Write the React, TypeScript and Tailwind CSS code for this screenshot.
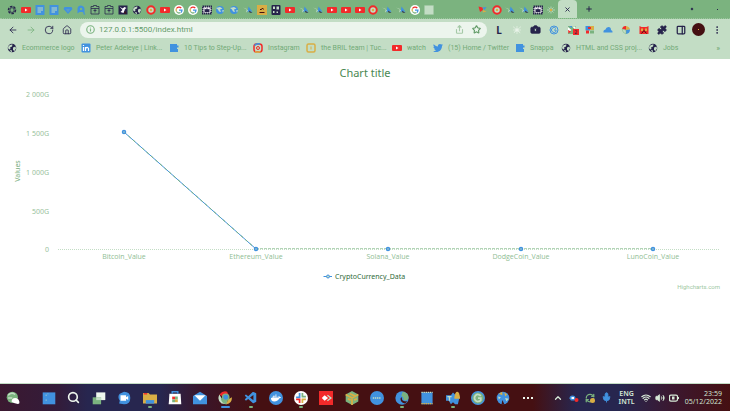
import type { ReactNode } from "react";
import {
  ArrowLeft, ArrowRight, RotateCw, House, Info, Share, Star, Camera, Puzzle, PanelRight,
  EllipsisVertical, Plus, X, ChevronUp, Mic, Wifi, Volume2, Search, RefreshCw,
} from "lucide-react";
import { VscVscode } from "react-icons/vsc";
import { FaDocker, FaTwitter } from "react-icons/fa";

const INK = "#26234b";
const RED = "#f22a2a";
const BLUE = "#4192df";
const GOLD = "#d9ae45";
const GREEN = "#7bb37f";
const PALE = "#c3ddc5";
const MAROON = "#451012";

function Svg({ children, size = "size-[10px]" }: { children: ReactNode; size?: string }) {
  return (
    <svg viewBox="0 0 20 20" className={`${size} shrink-0`} aria-hidden="true">
      {children}
    </svg>
  );
}

function Globe({ size }: { size?: string }) {
  return (
    <Svg size={size}>
      <circle cx="10" cy="10" r="8.5" fill={INK} />
      <path d="M3 6q4-4 8-3l-1 4-4 2 1 3-3 1-2-3zM12 9l5-2 1 4-3 5-3-2zM6 14l4 1v3l-3-1z" fill={PALE} />
    </Svg>
  );
}
function Knot() {
  return (
    <Svg>
      <circle cx="10" cy="10" r="7" fill="none" stroke={INK} strokeWidth="3" strokeDasharray="5 2" />
      <path d="M6 8l4-3 4 3v5l-4 2-4-2z" fill="none" stroke={INK} strokeWidth="1.5" />
    </Svg>
  );
}
function Youtube({ size }: { size?: string }) {
  return (
    <Svg size={size}>
      <rect x="0" y="4" width="20" height="12" rx="2" fill={RED} />
      <path d="M8 7l5 3-5 3z" fill="#fff" />
    </Svg>
  );
}
function Docs() {
  return (
    <Svg>
      <rect x="1" y="0" width="18" height="20" rx="1" fill={BLUE} />
      <path d="M5 6h11M5 10h11M5 14h7" stroke={PALE} strokeWidth="2" />
    </Svg>
  );
}
function Diamond() {
  return (
    <Svg>
      <path d="M3 4h14l2 4-9 10L1 8z" fill={BLUE} />
      <path d="M6 8h8l-4 7z" fill="#5a9bcb" />
    </Svg>
  );
}
function Rocket() {
  return (
    <Svg>
      <path d="M3 17V8q0-7 7-7 7 1 7 7v9l-4-3H7z" fill={BLUE} />
      <circle cx="10" cy="8" r="2.500" fill={GREEN} />
      <path d="M15 14l4 5h-4z" fill={BLUE} />
    </Svg>
  );
}
function Box() {
  return (
    <Svg>
      <path d="M2 7V3h5V1h6v2h5v4M2 7h16v11H2zM7 11h6M10 7v8" fill="none" stroke={INK} strokeWidth="1.500" />
    </Svg>
  );
}
function DarkBird() {
  return (
    <Svg>
      <rect x="1" y="1" width="18" height="18" fill={INK} />
      <path d="M3 3l6 4 4-3 4 2-3 2-3 8-6-2 4-4z" fill="#fff" />
      <path d="M14 12l3 5h-5z" fill={MAROON} />
    </Svg>
  );
}
function RedRing() {
  return (
    <Svg>
      <circle cx="10" cy="10" r="7.5" fill={PALE} stroke={RED} strokeWidth="4" />
      <circle cx="10" cy="10" r="2.5" fill={GOLD} />
    </Svg>
  );
}
function Google() {
  return (
    <Svg>
      <circle cx="10" cy="10" r="10" fill="#fff" />
      <path d="M14.500 6A6 6 0 0 0 5 7" fill="none" stroke={RED} strokeWidth="2.500" />
      <path d="M5 7a6 6 0 0 0 0 6" fill="none" stroke={GOLD} strokeWidth="2.500" />
      <path d="M5 13a6 6 0 0 0 8 2" fill="none" stroke={GREEN} strokeWidth="2.500" />
      <path d="M10 10h6q0 3-2 5" fill="none" stroke={BLUE} strokeWidth="2.500" />
    </Svg>
  );
}
function Film() {
  return (
    <Svg>
      <path d="M1 3h18v14H1z" fill="#fff" stroke={INK} strokeWidth="4" strokeDasharray="3 1" />
      <path d="M5 7l3 2 2-3 2 3 3-2v7H5z" fill={INK} />
    </Svg>
  );
}
function BlueGlobe() {
  return (
    <Svg>
      <circle cx="10" cy="10" r="8" fill={BLUE} />
      <path d="M2 6l8-2 5 3-5 2 2 5-4-1-2-4zM14 11l4-1-2 5z" fill={PALE} />
    </Svg>
  );
}
function Plane() {
  return (
    <Svg>
      <path d="M0 5l8 3-2 7 5-4" fill={PALE} />
      <path d="M11 3l4 5 4 6-6-2-4 3 1-6z" fill={BLUE} />
      <path d="M12 11l7 5-6-1z" fill={INK} />
    </Svg>
  );
}
function Tan() {
  return (
    <Svg>
      <rect width="20" height="20" fill={GOLD} />
      <path d="M6 9h3l2-3 2 3M5 15h10" stroke={MAROON} strokeWidth="2" fill="none" />
    </Svg>
  );
}
function Mask() {
  return (
    <Svg>
      <rect x="1" width="18" height="20" rx="2" fill={INK} />
      <path d="M4 3h4v5H4zM11 3h5v6h-5zM4 12h3v4H4zM11 13h3v3h-3z" fill={PALE} />
    </Svg>
  );
}
function Blank() {
  return (
    <Svg>
      <rect x="1" y="1" width="18" height="18" fill={PALE} stroke="#a8cbaa" strokeDasharray="2 2" />
    </Svg>
  );
}
function Pinwheel() {
  return (
    <Svg>
      <path d="M1 3l8 2 1 5-6 4z" fill={RED} />
      <path d="M9 5l8-1-4 6z" fill={BLUE} />
      <path d="M10 10l7 3-8 2z" fill={GOLD} />
    </Svg>
  );
}
function Spark() {
  return (
    <Svg>
      <path d="M2 10h16M10 3v14M5 5l10 10M15 5L5 15" stroke={PALE} strokeWidth="1.500" />
      <circle cx="10" cy="10" r="2.500" fill={GOLD} />
    </Svg>
  );
}
function Linkedin() {
  return (
    <Svg>
      <rect x="1" y="1" width="18" height="18" rx="2" fill={BLUE} />
      <path d="M5 8v8M9 16V8M9 11q4-5 6 0v5M5 4v2" stroke="#fff" strokeWidth="2.500" fill="none" />
    </Svg>
  );
}
function Square() {
  return (
    <Svg>
      <path d="M2 2h14v3h3v4h-3v3h2v6H2z" fill={BLUE} />
    </Svg>
  );
}
function Instagram() {
  return (
    <Svg>
      <rect x="2" y="2" width="16" height="16" rx="5" fill={PALE} stroke={RED} strokeWidth="3" />
      <path d="M3 5q5-5 11-3" stroke={BLUE} strokeWidth="3" fill="none" />
      <path d="M4 17q5 3 11 0" stroke={GOLD} strokeWidth="3" fill="none" />
      <circle cx="10" cy="10" r="3" fill="none" stroke={RED} strokeWidth="2" />
    </Svg>
  );
}
function GoldFrame() {
  return (
    <Svg>
      <rect x="2" y="2" width="16" height="16" rx="3" fill={PALE} stroke={GOLD} strokeWidth="3" />
      <path d="M10 7v6" stroke={GOLD} strokeWidth="2" />
    </Svg>
  );
}

const tabs: [string, () => ReactNode][] = [
  ["Home", Knot], ["Video", Youtube], ["Document", Docs], ["Notes", Docs], ["Gem", Diamond],
  ["Launch", Rocket], ["Package", Box], ["Package", Box], ["Bird", DarkBird], ["Site", Globe],
  ["Record", RedRing], ["Video", Youtube], ["Google", Google], ["Google", Google], ["Film", Film],
  ["World", BlueGlobe], ["World", BlueGlobe], ["Flight", Plane], ["Sand", Tan], ["Mask", Mask],
  ["Video", Youtube], ["Flight", Plane], ["Flight", Plane], ["Video", Youtube], ["Video", Youtube],
  ["Video", Youtube], ["Record", RedRing], ["Flight", Plane], ["Flight", Plane], ["Google", Google],
  ["Blank", Blank],
];
const moreTabs: [string, () => ReactNode][] = [
  ["Pinwheel", Pinwheel], ["Record", RedRing], ["Flight", Plane], ["Flight", Plane], ["Film", Film], ["Spark", Spark],
];

function TabStrip() {
  return (
    <div className="flex h-[19px] items-stretch border-b border-dotted border-[#9cc79f] bg-[#7bb37f]">
      <nav aria-label="Tabs" className="grid flex-1 auto-cols-fr grid-flow-col pt-px pl-[5px]">
        {tabs.map(([name, Icon], i) => (
          <button key={i} aria-label={name} className="flex items-center justify-center">
            <Icon />
          </button>
        ))}
      </nav>
      <div className="ml-10 flex w-[82px] pt-px">
        {moreTabs.map(([name, Icon], i) => (
          <button key={i} aria-label={name} className="flex flex-1 items-center justify-center">
            <Icon />
          </button>
        ))}
      </div>
      <button aria-label="Close tab" className="flex w-[19px] items-center justify-center rounded-t-sm bg-[#c3ddc5]">
        <X className="size-[7px] text-[#26234b]" strokeWidth={3} />
      </button>
      <button aria-label="New tab" className="flex w-[24px] items-center justify-center">
        <Plus className="size-2 text-[#26234b]" strokeWidth={3} />
      </button>
      <div className="flex w-[129px] items-center justify-end gap-6 pr-3 text-[#26234b]">
        <button aria-label="Minimize" className="size-[2px] rotate-45 bg-[#26234b]" />
        <button aria-label="Close window" className="size-px bg-[#26234b]" />
      </div>
    </div>
  );
}

function Extension({ name, children }: { name: string; children: ReactNode }) {
  return (
    <button aria-label={name} className="relative flex flex-1 items-center justify-center text-[#26234b]">
      {children}
    </button>
  );
}

function Toolbar() {
  return (
    <div className="flex h-[21px] items-center bg-[#c3ddc5] text-[#26234b]">
      <div className="flex w-[76px] items-center justify-around pl-1">
        <button aria-label="Back"><ArrowLeft className="size-[10px]" strokeWidth={2} /></button>
        <button aria-label="Forward"><ArrowRight className="size-[10px] text-[#7bb37f]" strokeWidth={2} /></button>
        <button aria-label="Reload"><RotateCw className="size-[10px]" strokeWidth={2} /></button>
        <button aria-label="Home"><House className="size-[10px]" strokeWidth={2} /></button>
      </div>
      <form className="ml-1 flex h-4 flex-1 items-center gap-1 rounded-full bg-[#ecf5ed] px-[6px]">
        <Info className="size-[9px] text-[#7bb37f]" strokeWidth={3} />
        <input
          aria-label="Address"
          defaultValue="127.0.0.1:5500/index.html"
          className="min-w-0 flex-1 bg-transparent font-['Roboto',sans-serif] text-[8px] leading-3 text-[#659c6b] outline-none"
        />
        <button type="button" aria-label="Share" className="mr-1"><Share className="size-[9px] text-[#a5c9a7]" strokeWidth={3} /></button>
        <button type="button" aria-label="Bookmark"><Star className="size-[9px] text-[#5f9965]" strokeWidth={3} /></button>
      </form>
      <div className="mr-1 ml-[3px] flex w-[236px]">
        <Extension name="L"><span className="text-[10px] leading-3 font-bold">L</span></Extension>
        <Extension name="Flower"><Svg><path d="M3 4l14 12M17 4L3 16M10 3v14M3 10h14" stroke="#f4faf4" strokeWidth="2" strokeDasharray="2 1" /></Svg></Extension>
        <Extension name="Camera"><Camera className="size-[11px] fill-[#26234b] [&>circle]:fill-[#c3ddc5]" strokeWidth={2} /></Extension>
        <Extension name="Grammar"><Svg><circle cx="10" cy="10" r="8" fill="none" stroke={BLUE} strokeWidth="2" /><path d="M14 7a5 5 0 1 0 0 6v-3h-4" fill="none" stroke={BLUE} strokeWidth="2" /></Svg></Extension>
        <Extension name="Alerts">
          <Svg><path d="M2 2h16v16H2z" fill={GREEN} /><path d="M2 4l7 6-7 5zM10 3h7v6z" fill="#fff" /><path d="M2 10l6 3-5 4z" fill={RED} /><path d="M4 2h6v4z" fill={BLUE} /></Svg>
          <span className="absolute top-1.5 left-2.5 size-[6px] bg-[#f22a2a] text-center text-[5px] leading-[6px]">2</span>
        </Extension>
        <Extension name="Mosaic"><Svg><path d="M1 2h9v9H1z" fill={BLUE} /><path d="M10 2h8v8h-8z" fill={GOLD} /><path d="M2 11h6v6H2zM6 4h6v4H6z" fill={RED} /><path d="M10 11h8v6h-8z" fill={GREEN} /></Svg></Extension>
        <Extension name="Cloud"><Svg><path d="M1 15q-1-5 4-6 1-5 6-5t5 6q4 1 3 5z" fill={BLUE} /></Svg></Extension>
        <Extension name="Colors"><Svg><path d="M10 10L2 8q2-7 8-6z" fill={RED} /><path d="M10 10V2q7 1 8 7z" fill={GOLD} /><path d="M10 10l8-1q0 8-8 9z" fill={BLUE} /><path d="M10 10v8q-7-2-8-10z" fill={PALE} stroke={GREEN} /></Svg></Extension>
        <Extension name="Monkey"><Svg><path d="M1 2l4 2h10l4-2v16H1z" fill={RED} /><path d="M4 7h4v5H4zM12 7h4v5h-4z" fill={GOLD} /><path d="M5 17l5-6 5 6" stroke={MAROON} strokeWidth="2" fill="none" /></Svg></Extension>
        <Extension name="Extensions"><Puzzle className="size-[10px] fill-[#26234b]" /></Extension>
        <Extension name="Side panel"><PanelRight className="size-[10px]" strokeWidth={3} /></Extension>
        <Extension name="Profile"><span className="size-[13px] rounded-full bg-[#451012] p-[6px]"><span className="block size-px bg-[#d9ae45]" /></span></Extension>
        <Extension name="Menu"><EllipsisVertical className="size-[10px]" strokeWidth={2} /></Extension>
      </div>
    </div>
  );
}

function Bookmark({ icon, label, width }: { icon: ReactNode; label: string; width: string }) {
  return (
    <a href="#" className={`flex shrink-0 items-center gap-[5px] whitespace-nowrap ${width}`}>
      {icon}
      <span>{label}</span>
    </a>
  );
}

function Bookmarks() {
  return (
    <nav aria-label="Bookmarks" className="flex h-[19px] items-center bg-[#c3ddc5] pr-[10px] pb-[3px] pl-[7px] font-['Roboto',sans-serif] text-[7px] leading-3 text-[#72aa77]">
      <Bookmark width="w-[74px]" icon={<Globe />} label="Ecommerce logo" />
      <Bookmark width="w-[88px]" icon={<Linkedin />} label="Peter Adeleye | Link..." />
      <Bookmark width="w-[84px]" icon={<Square />} label="10 Tips to Step-Up..." />
      <Bookmark width="w-[53px]" icon={<Instagram />} label="Instagram" />
      <Bookmark width="w-[86px]" icon={<GoldFrame />} label="the BRIL team | Tuc..." />
      <Bookmark width="w-[41px]" icon={<Youtube />} label="watch" />
      <Bookmark width="w-[82px]" icon={<FaTwitter className="size-[10px] shrink-0 text-[#4192df]" />} label="(15) Home / Twitter" />
      <Bookmark width="w-[46px]" icon={<Square />} label="Snappa" />
      <Bookmark width="w-[87px]" icon={<Globe />} label="HTML and CSS proj..." />
      <Bookmark width="w-[40px]" icon={<Globe />} label="Jobs" />
      <button aria-label="More bookmarks" className="ml-auto font-bold">»</button>
    </nav>
  );
}

const points: [string, number, number][] = [
  ["Bitcoin_Value", 124, 73], ["Ethereum_Value", 256, 190], ["Solana_Value", 388, 190],
  ["DodgeCoin_Value", 521, 190], ["LunoCoin_Value", 653, 190],
];
const ticks: [string, number][] = [["2 000G", 35], ["1 500G", 74], ["1 000G", 113], ["500G", 152], ["0", 190]];

function Chart() {
  return (
    <main className="flex-1 bg-white">
      <svg viewBox="0 0 730 324" className="block w-full" role="img" aria-label="Chart title">
        <text x="365" y="18" textAnchor="middle" fontSize="11" fill="#4a8852">Chart title</text>
        {ticks.map(([label, y]) => (
          <text key={label} x="49" y={y + 3} textAnchor="end" fontSize="7" fill="#98c29c">{label}</text>
        ))}
        <text transform="translate(20 112) rotate(-90)" textAnchor="middle" fontSize="7" fill="#76ad7b">Values</text>
        <path d="M58 190.500H719" stroke="#c3ddc5" strokeDasharray="1 1" />
        <path d="M256 189.500H653" stroke="#b4d5b8" strokeDasharray="3 1" />
        <path d="M124 73L256 190" stroke="#4192df" fill="none" />
        <path d="M124 73L256 190" stroke="#7bb37f" strokeDasharray="3 3" fill="none" />
        {points.map(([label, x, y]) => (
          <g key={label}>
            <circle cx={x} cy={y} r="1.500" fill="#c3ddc5" stroke="#4192df" strokeWidth="1.500" />
            <text x={x} y="200" textAnchor="middle" fontSize="7" fill="#8fbd94" className="font-['Open_Sans',sans-serif]">{label}</text>
          </g>
        ))}
        <path d="M323.500 217.500H332" stroke="#4192df" />
        <circle cx="328" cy="217.500" r="1.500" fill="#c3ddc5" stroke="#4192df" />
        <text x="335" y="220" fontSize="7" fill="#2f6a39">CryptoCurrency_Data</text>
        <text x="720" y="230" textAnchor="end" fontSize="6" fill="#a0c8a4" className="font-['Roboto',sans-serif]">Highcharts.com</text>
      </svg>
    </main>
  );
}

const apps: [string, ReactNode, boolean][] = [
  ["Start", <><path d="M1 2h18v17H1z" fill={BLUE} /><path d="M5 6h2M8 4h1M5 13h2" stroke={PALE} /></>, false],
  ["Search", null, false],
  ["Task view", <><path d="M6 2h13v11H6z" fill="#eef7ee" /><path d="M1 9h12v10H1z" fill={GREEN} /><path d="M6 9h7v4H6z" fill={PALE} /></>, false],
  ["Chat", <><path d="M10 1q9 0 9 9t-9 9l-7-1 1-4q-4-6 0-10z" fill={BLUE} /><path d="M5 6h8v8H5zM13 9l3-2v6l-3-2z" fill="#fff" /></>, false],
  ["Files", <><path d="M0 3h8l2 2h10v13H0z" fill={GOLD} /><path d="M4 13h12v5H4z" fill={BLUE} /><path d="M1 3h5v2H1z" fill={RED} /></>, true],
  ["Store", <><path d="M2 4h16l1 15H1z" fill="#fff" /><path d="M6 4V1h8v3" stroke={BLUE} strokeWidth="2" fill="none" /><path d="M6 8h4v4H6z" fill={RED} /><path d="M10 8h4v4h-4zM6 12h4v4H6z" fill={GREEN} /><path d="M10 12h4v4h-4z" fill={GOLD} /></>, false],
  ["Mail", <><path d="M0 7l10-6 10 6v12H0z" fill={BLUE} /><path d="M2 6h16l-8 8z" fill="#fff" /></>, false],
  ["Chrome", <><path d="M10 10L2 5q5-6 11-4l2 5z" fill={RED} /><path d="M2 5q-4 8 3 13l7 1 1-4-7-3z" fill={PALE} /><path d="M4 10q0 7 8 9l1-4-5-2z" fill={GREEN} /><path d="M14 12l6-3q0 9-8 10z" fill={GOLD} /><circle cx="11" cy="9" r="4.500" fill={BLUE} stroke={GREEN} strokeWidth="2" /></>, true],
  ["Code", null, true],
  ["Docker", null, false],
  ["Slack", <><circle cx="10" cy="10" r="10" fill="#fff" /><path d="M8 3v6H3" stroke={BLUE} strokeWidth="2.500" fill="none" /><path d="M17 8h-5V3" stroke={GREEN} strokeWidth="2.500" fill="none" /><path d="M3 12h5v5" stroke={RED} strokeWidth="2.500" fill="none" /><path d="M12 17v-5h5" stroke={GOLD} strokeWidth="2.500" fill="none" /></>, true],
  ["Remote", <><path d="M0 0h20v20H0z" fill={RED} /><path d="M8 6l5 4-5 4-4-4z" fill="#fff" /><path d="M12 6l5 4-5 4" stroke={PALE} strokeWidth="2" fill="none" /></>, false],
  ["Cube", <><path d="M10 0l9 5v10l-9 5-9-5V5z" fill={GREEN} /><path d="M1 5l9 5 9-5M10 10v10M4 11l4 2M13 13l4-2M7 4l7 3" stroke={GOLD} strokeWidth="2.500" fill="none" /></>, false],
  ["Dots", <><circle cx="10" cy="10" r="10" fill={BLUE} /><path d="M4 10h12" stroke={PALE} strokeWidth="2" strokeDasharray="2 1" /></>, false],
  ["Edge", <><circle cx="10" cy="10" r="9.500" fill={BLUE} /><path d="M11 1q10 2 8 10-3 4-7 2 1-5-3-6z" fill={GREEN} /><path d="M10 9q-2 6 8 6l-4 3Q7 16 8 10z" fill={MAROON} /></>, true],
  ["Notepad", <><path d="M2 2h16v17H2z" fill={BLUE} /><path d="M2 2h16" stroke={PALE} strokeWidth="2" strokeDasharray="2 1" /><path d="M2 18h16" stroke={GOLD} strokeWidth="2" strokeDasharray="2 1" /></>, false],
  ["Teams", <><path d="M0 6h7l3-4 4 4 5 4-2 9h-4l-3-3-3 3-3-5H0z" fill={BLUE} /><path d="M2 8h6M5 8v6" stroke={PALE} strokeWidth="2" /><path d="M12 9q1-8 4-8t4 8v2h-8z" fill={GOLD} /></>, true],
  ["Camtasia", <><circle cx="10" cy="10" r="9" fill={GREEN} stroke={BLUE} strokeWidth="2" /><path d="M14 7a5 5 0 1 0 0 6v-3h-4" fill="none" stroke={PALE} strokeWidth="2.500" /></>, false],
  ["Paint", <><circle cx="10" cy="10" r="9" fill={BLUE} /><path d="M4 4l5-3v5zM12 2l4 3-3 3z" fill={GOLD} /><path d="M3 8l4 1-3 3zM13 10l5 1-3 4z" fill={PALE} /><path d="M9 13l3 6H8z" fill={MAROON} /></>, false],
];

function AppIcon({ name, art }: { name: string; art: ReactNode }) {
  if (name === "Search") return <Search className="size-[13px] text-[#eef7ee]" strokeWidth={3} />;
  if (name === "Code") return <VscVscode className="size-[14px] text-[#4192df]" />;
  if (name === "Docker")
    return (
      <span className="flex size-[14px] items-center justify-center rounded-full bg-[#4192df]">
        <FaDocker className="size-[10px] text-white" />
      </span>
    );
  return <Svg size="size-[14px]">{art}</Svg>;
}

function Taskbar() {
  return (
    <footer className="flex h-[27px] items-stretch bg-linear-[90deg,#3b1830_0%,#331c3a_8%,#27264f_12%,#27264f_22%,#3b1528_28%,#451012_35%,#451012_73%,#27264f_79%,#27264f_85%,#3b1830_92%,#451012_100%] text-[#d7ead8]">
      <button aria-label="Weather" className="flex w-9 items-center pl-[6px]">
        <Svg size="size-[14px]">
          <circle cx="9" cy="9" r="8" fill={GREEN} />
          <path d="M3 6q5-5 10-1M3 10h6" stroke={PALE} strokeWidth="2" fill="none" />
          <path d="M8 15q0-5 5-5t6 5-5 3-6-3z" fill="#fff" />
        </Svg>
      </button>
      <nav aria-label="Applications" className="grid flex-1 auto-cols-fr grid-flow-col">
        {apps.map(([name, art, open]) => (
          <button key={name} aria-label={name} className="relative flex items-center justify-center">
            <AppIcon name={name} art={art} />
            {open && (
              <span
                className={
                  name === "Chrome"
                    ? "absolute bottom-[3px] h-[2px] w-[9px] rounded-full bg-[#4192df]"
                    : "absolute bottom-[3px] h-[2px] w-1 rounded-full bg-[#7bb37f]"
                }
              />
            )}
          </button>
        ))}
        <button aria-label="More" className="flex items-center justify-center gap-[2px]">
          <span className="size-[2px] bg-[#eef7ee]" />
          <span className="size-[2px] bg-[#eef7ee]" />
          <span className="size-[2px] bg-[#eef7ee]" />
        </button>
      </nav>
      <div className="flex w-[189px] items-center justify-between pr-2 pl-3">
        <button aria-label="Hidden icons"><ChevronUp className="size-[10px]" strokeWidth={3} /></button>
        <Svg><path d="M1 11q0-6 6-6t6 6l-2 4H4z" fill={BLUE} /><path d="M5 8h5v4H5z" fill="#fff" /><circle cx="15" cy="14" r="4" fill={RED} /></Svg>
        <span className="relative">
          <RefreshCw className="size-[10px] text-[#7bb37f]" strokeWidth={3} />
          <span className="absolute right-0 bottom-0 size-[5px] rounded-full bg-[#d9ae45]" />
        </span>
        <Mic className="size-[11px] fill-[#4192df] text-[#4192df]" strokeWidth={2} />
        <button className="text-center text-[7px] leading-2 font-semibold">ENG<br />INTL</button>
        <span className="flex items-center gap-1">
          <Wifi className="size-[10px]" strokeWidth={3} />
          <Volume2 className="size-[10px] fill-current" strokeWidth={2} />
          <Svg><rect x="1" y="4" width="16" height="12" rx="3" fill="none" stroke="#d7ead8" strokeWidth="2.500" /><path d="M6 7h5v6H6z" fill="#d7ead8" /><path d="M19 8v4" stroke="#d7ead8" strokeWidth="2" /></Svg>
        </span>
        <button className="text-right font-['Open_Sans',sans-serif] text-[7px] leading-2 font-medium">23:59<br />05/12/2022</button>
      </div>
    </footer>
  );
}

export default function App() {
  return (
    <div className="flex min-h-screen flex-col bg-white font-['Noto_Sans','Open_Sans',sans-serif]">
      <TabStrip />
      <Toolbar />
      <Bookmarks />
      <Chart />
      <div className="-mt-px h-px bg-[#c3ddc5]" />
      <Taskbar />
    </div>
  );
}
